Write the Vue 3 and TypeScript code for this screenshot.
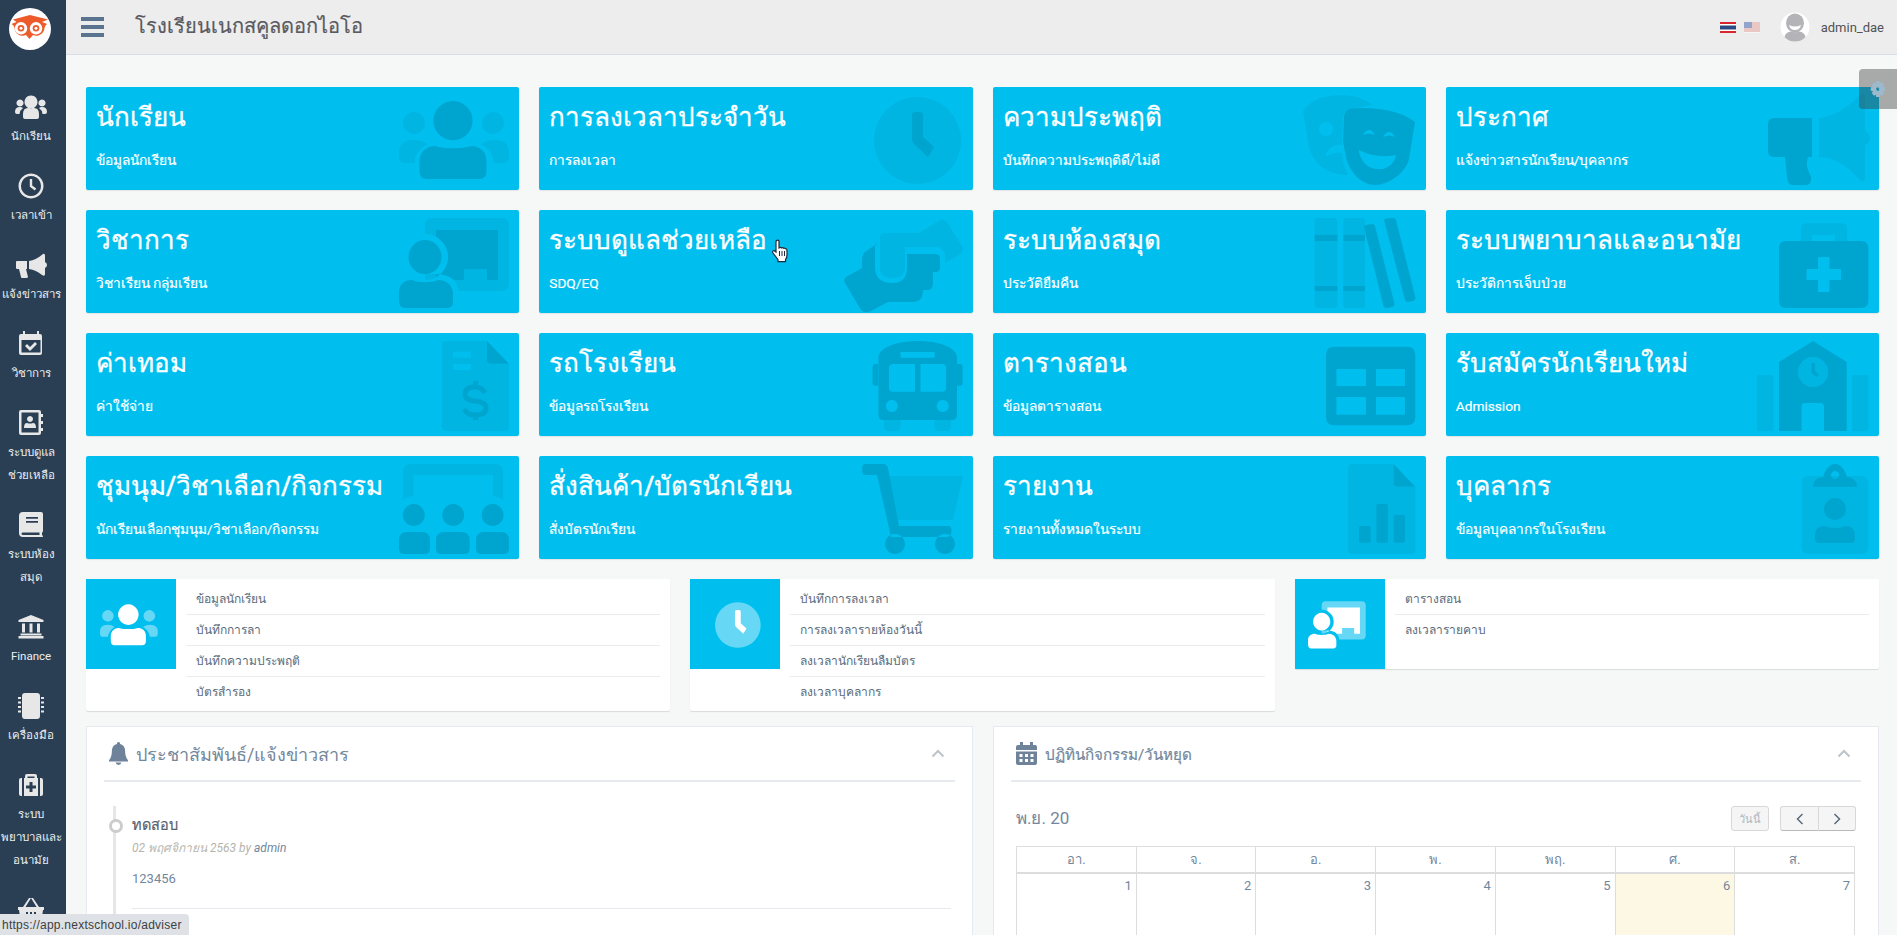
<script setup lang="ts">
type Layer = { c: 's' | 'p' | 'b' | 'l'; d: string }

const icons: Record<string, Layer[]> = {
  users: [
    { c: 's', d: 'M15 25a11 11 0 1 0 .01 0zM94 25a11 11 0 1 0 .01 0zM0 70V66Q0 53 14 53Q22 53 28 57Q17 63 15 76H6Q0 76 0 70ZM110 70V66Q110 53 96 53Q88 53 82 57Q93 63 95 76H104Q110 76 110 70Z' },
    { c: 'p', d: 'M54 14a19.6 19.6 0 1 0 .01 0zM20.5 82V74C20.5 64 29 59 36 59C44 62 64 62 72 59C80 59 87.5 64 87.5 74V84Q87.5 92 80 92H28Q20.5 92 20.5 84Z' }
  ],
  clock: [
    { c: 's', d: 'M64.5 10a43.5 43.5 0 1 0 .01 0z' },
    { c: 'p', d: 'M59 28Q59 25 62 25H67Q70 25 70 28V50L81 60L75 70L61 57Q59 55 59 52Z' }
  ],
  masks: [
    { c: 's', d: 'M-3 24C5 12 20 8 37 8C48 8 60 12 66 18L45 22Q37 24 37 32L36 60Q36 78 42 88C25 88 8 80 3 60ZM20 35a7 7 0 1 0 .01 0zM20 66Q27 56 36 58V66Q28 64 20 70Z' },
    { c: 'p', d: 'M44 22C55 20 90 20 109 35L103 72C100 86 82 98 69 98C56 98 43 85 40 70L37 55L38 30Q38 24 44 22ZM57 48Q63 38 69 48Q63 45 57 48ZM77 50Q83 40 89 50Q83 47 77 50ZM52.7 63Q71 72 90 68C88 78 80 83 71.6 82C62 82 54 74 52.7 63Z' }
  ],
  bullhorn: [
    { c: 's', d: 'M60 31C75 30 92 18 102 7Q106 5 106 12V44Q111 46 111 51Q111 56 106 58V90Q106 96 101 93C90 80 75 70 60 70Z' },
    { c: 'p', d: 'M15 31H53V70H49C46 80 50 84 52 90Q53 98 46 98H33Q29 98 28 90L26 70H15Q9 70 9 64V37Q9 31 15 31Z' }
  ],
  teacher: [
    { c: 's', d: 'M34 8H102Q110 8 110 16V73Q110 81 102 81H34Q26 81 26 73V16Q26 8 34 8Z' },
    { c: 'p', d: 'M37 20H99V70H88V59H65V70H37Z' },
    { c: 'b', d: 'M26 24a23 23 0 1 0 .01 0zM-4 103V84Q-4 64 16 64H36Q60 64 60 86V103Z' },
    { c: 'p', d: 'M26 30a16.5 17 0 1 0 .01 0zM0 90V82C0 74 6 70 13 70C20 73 32 73 39 70C48 70 54 76 54 84V92Q54 98 48 98H6Q0 98 0 90Z' }
  ],
  hands: [
    { c: 's', d: 'M33 23H66L87 10Q90 8 94 12L110 38Q110 42 106 45L92 53V45Q90 37 83 37H52V57Q52 68 39.5 68Q27 68 27 57V28Q27 23 33 23Z' },
    { c: 'p', d: 'M25 33L12 42Q9 45 9 50V58L-7 67Q-10 70 -8 73L8 100Q12 104 18 101L35 92H60Q70 92 70 80H75Q80 80 80 73V62H83Q87 62 87 57V48Q87 44 81 44H54V57Q54 73 39.5 73Q22 73 22 57V36Z' }
  ],
  books: [
    { c: 's', d: 'M12 8H28Q31.5 8 31.5 12V94Q31.5 98 28 98H12Q8.6 98 8.6 94V12Q8.6 8 12 8ZM40.5 8H56Q59 8 59 12V94Q59 98 56 98H40.5Q37.2 98 37.2 94V12Q37.2 8 40.5 8Z' },
    { c: 'p', d: 'M8.6 25H31.5V31H8.6ZM37.2 25H59V31H37.2ZM8.6 76H31.5V81H8.6ZM37.2 76H59V81H37.2ZM58 17Q58 15.5 60 15L66 14Q68.5 14 69 16L88.5 94Q88.5 96.5 86 97L81 98Q78 98 77.5 96ZM78 10Q78 9 80 8.5L87 8Q89.5 8 90 10L109.5 88Q109.5 90 107 91L102 92Q99.5 92 99 90Z' }
  ],
  kit: [
    { c: 's', d: 'M48 13H82Q88 13 88 19V31H76V25H53V31H42V19Q42 13 48 13Z' },
    { c: 'p', d: 'M27 31H102Q109.4 31 109.4 38V90Q109.4 98 102 98H27Q20 98 20 90V38Q20 31 27 31ZM59 47V59H47.6V70H59V82H70.5V70H82V59H70.5V47Z' }
  ],
  invoice: [
    { c: 's', d: 'M47 8H88V27Q88 31 92 31H110V94Q110 98 106 98H47Q43 98 43 94V12Q43 8 47 8ZM54 18.7V24.7H72V18.7ZM54 31V37H72V31Z' },
    { c: 'p', d: 'M88 8L110 30.7H92Q88 30.7 88 27Z' },
    { c: 'l', d: 'M86 60Q83 54 76 54Q66 54 66 61Q66 67 76 68Q87 69 87 75Q87 82 76 82Q68 82 65 76M76.5 48V54M76.5 82V87' }
  ],
  bus: [
    { c: 's', d: 'M31 87H47.6V93Q47.6 98 43 98H35Q31 98 31 93ZM81.6 87H98V93Q98 98 94 98H86Q81.6 98 81.6 93Z' },
    { c: 'p', d: 'M25.4 25C25.4 14 45 8 65 8C85 8 104 14 104 25V82Q104 87 99 87H30Q25.4 87 25.4 82ZM47.6 19V24.7H81.6V19ZM40 31Q36 31 36 35V55Q36 58.7 40 58.7H62V31ZM67.5 31V58.7H89Q93 58.7 93 55V35Q93 31 89 31ZM38.8 67a6 6 0 1 0 .01 0zM89.7 67a6 6 0 1 0 .01 0zM22 31H25V52.7H22Q19.6 52.7 19.6 50V34Q19.6 31 22 31ZM104 31H107Q109.6 31 109.6 34V50Q109.6 52.7 107 52.7H104Z' }
  ],
  table: [
    { c: 'p', d: 'M28 13.7H101Q109.3 13.7 109.3 22V84Q109.3 92.3 101 92.3H28Q20 92.3 20 84V22Q20 13.7 28 13.7ZM30.4 36V53H60V36ZM70 36V53H99V36ZM30.4 64V81.7H60V64ZM70 64V81.7H99V64Z' }
  ],
  school: [
    { c: 's', d: 'M0 42H12Q14.4 42 14.4 45V98H0Q-2 98 -2 95V45Q-2 42 0 42ZM93 42H107Q109.4 42 109.4 45V95Q109.4 98 107 98H93ZM54 24a15 15 0 1 0 .01 0z' },
    { c: 'p', d: 'M54 8L87.7 29V98H65V74Q65 70 61 70H46Q42.5 70 42.5 74V98H20V29ZM54 24a15 15 0 1 0 .01 0z' },
    { c: 'p', d: 'M52.5 30H56V38L60 41.5L58 44L52.5 40Z' }
  ],
  group: [
    { c: 's', d: 'M4 16Q4 8 12 8H96Q104 8 104 16V44Q98 40 94 40V19H14.4V40Q9 40 4 44Z' },
    { c: 'p', d: 'M14.8 48a11 11 0 1 0 .01 0zM54.2 48a11 11 0 1 0 .01 0zM93.6 48a11 11 0 1 0 .01 0zM0 84Q0 76 8 76H23Q31 76 31 84V93Q31 98 26 98H5Q0 98 0 93ZM37 84Q37 76 45 76H62Q70.6 76 70.6 84V93Q70.6 98 66 98H42Q37 98 37 93ZM77 84Q77 76 85 76H102Q110 76 110 84V93Q110 98 105 98H82Q77 98 77 93Z' }
  ],
  cart: [
    { c: 's', d: 'M27 20H110L100 64H36Z' },
    { c: 'p', d: 'M12 8H30Q34 8 35 12L46 70H95Q98.5 70 98.5 74Q98.5 81 94 81H38L24 19H12Q9 19 9 13.5Q9 8 12 8ZM42 78a10 10 0 1 0 .01 0zM92 78a10 10 0 1 0 .01 0z' }
  ],
  report: [
    { c: 's', d: 'M46 8H87.6V27Q87.6 31 91 31H109.3V94Q109.3 98 105 98H46Q42 98 42 94V12Q42 8 46 8Z' },
    { c: 'p', d: 'M87.6 8L109.3 30.7H91Q87.6 30.7 87.6 27ZM53 72Q53 70 55 70H63Q64.7 70 64.7 72V85Q64.7 86.7 63 86.7H55Q53 86.7 53 85ZM70.4 50Q70.4 48 72 48H80Q82 48 82 50V85Q82 86.7 80 86.7H72Q70.4 86.7 70.4 85ZM87.6 61Q87.6 59 89 59H97Q99 59 99 61V85Q99 86.7 97 86.7H89Q87.6 86.7 87.6 85Z' }
  ],
  badge: [
    { c: 's', d: 'M50 20H102Q109.4 20 109.4 27V91Q109.4 98 102 98H50Q42.5 98 42.5 91V27Q42.5 20 50 20Z' },
    { c: 'p', d: 'M54 30.7Q54 22 64 21C66 14 70 8 76 8C82 8 86 14 88 21Q98 22 98 30.7ZM76 15a4 4 0 1 0 .01 0zM76 42a11 11 0 1 0 .01 0zM56 80Q56 70 65 70Q76 74 87 70Q96 70 96 80V83Q96 87 92 87H60Q56 87 56 83Z' }
  ]
}

const navPaths: Record<string, string> = {
  users: 'M17 3.5a6.5 6.5 0 1 0 .01 0zM6 7.5a3.5 3.5 0 1 0 .01 0zM28 7.5a3.5 3.5 0 1 0 .01 0zM9 25v-3q0-6 5-6q3 1.5 6 0q5 0 5 6v3q0 2-2 2H11q-2 0-2-2ZM1 20q0-5 5-5q2 0 3 1q-3 2-3.5 6H3q-2 0-2-2ZM33 20q0-5-5-5q-2 0-3 1q3 2 3.5 6H31q2 0 2-2Z',
  clock: 'M17 2.5a12.5 12.5 0 1 0 .01 0zM17 5a10 10 0 1 1-.01 0zM15.8 8h2.4v6.5l4 3-1.4 1.9-5-3.7z',
  bullhorn: 'M29 4Q31 3 31 6V12Q33 13 33 15Q33 17 31 18V24Q31 27 28 25Q22 20 15 19V11Q22 10 29 4ZM3 11H13V19H12L14 27Q14 28 12 28H8Q7 28 7 27L5 19H3Q2 19 2 18V12Q2 11 3 11Z',
  calendar: 'M9 2h2v3h12V2h2v3h1q2 0 2 2v17q0 2-2 2H7q-2 0-2-2V7q0-2 2-2h2zM7.5 11v12.5h19V11zM11 17l2-2 3 3 5-5 2 2-7 7z',
  contact: 'M7 2H25q2 0 2 2v2h2v3h-2v4h2v3h-2v4h2v3h-2v2q0 2-2 2H7q-2 0-2-2V4q0-2 2-2zM7.5 4.5V24.5H24.5V4.5zM16 8a3 3 0 1 0 .01 0zM10 20q0-5 3-5q3 1 6 0q3 0 3 5z',
  book: 'M9 2H27q2 0 2 2V21q0 1-1 1.5V25q1 .5 1 1.5q0 .5-1 .5H9q-4 0-4-4V6q0-4 4-4zM12 7v1.8h12V7zM12 11v1.8h12V11zM9 22.5q-1.500 0-1.500 1.250T9 25h16.500v-2.500z',
  landmark: 'M17 3L29.500 8V10H4.500V8ZM8 11.500h3v9H8zM15.500 11.500h3v9h-3zM23 11.500h3v9h-3zM6.500 21.500h21v2h-21zM4.500 24h25v2.500h-25z',
  chip: 'M11 2h12q3 0 3 3v20q0 3-3 3H11q-3 0-3-3V5q0-3 3-3zM4 6h3v2H4zM4 10.500h3v2H4zM4 15h3v2H4zM4 19.500h3v2H4zM27 6h3v2h-3zM27 10.500h3v2h-3zM27 15h3v2h-3zM27 19.500h3v2h-3z',
  kit: 'M11 8V6q0-2 2-2h8q2 0 2 2V8h-2.500V6.500h-7V8zM5 10q0-2 2-2h1v18H7q-2 0-2-2zM29 10q0-2-2-2h-1v18h1q2 0 2-2zM10 8h14v18H10zM15.500 12v3.500H12v3h3.500V22h3v-3.500H22v-3h-3.500V12z',
  basket: 'M4 12H30V15H29L27 28H7L5 15H4ZM12 17v8h2v-8zM16 17v8h2v-8zM20 17v8h2v-8zM9 12L15 3h2L11.500 12ZM25 12L19 3h-2L22.500 12Z'
}

const navItems = [
  { icon: 'users', lines: ['นักเรียน'] },
  { icon: 'clock', lines: ['เวลาเข้า'] },
  { icon: 'bullhorn', lines: ['แจ้งข่าวสาร'] },
  { icon: 'calendar', lines: ['วิชาการ'] },
  { icon: 'contact', lines: ['ระบบดูแล', 'ช่วยเหลือ'] },
  { icon: 'book', lines: ['ระบบห้อง', 'สมุด'] },
  { icon: 'landmark', lines: ['Finance'] },
  { icon: 'chip', lines: ['เครื่องมือ'] },
  { icon: 'kit', lines: ['ระบบ', 'พยาบาลและ', 'อนามัย'] },
  { icon: 'basket', lines: [] as string[] }
]

const cards = [
  { title: 'นักเรียน', sub: 'ข้อมูลนักเรียน', icon: 'users' },
  { title: 'การลงเวลาประจำวัน', sub: 'การลงเวลา', icon: 'clock' },
  { title: 'ความประพฤติ', sub: 'บันทึกความประพฤติดี/ไม่ดี', icon: 'masks' },
  { title: 'ประกาศ', sub: 'แจ้งข่าวสารนักเรียน/บุคลากร', icon: 'bullhorn' },
  { title: 'วิชาการ', sub: 'วิชาเรียน กลุ่มเรียน', icon: 'teacher' },
  { title: 'ระบบดูแลช่วยเหลือ', sub: 'SDQ/EQ', icon: 'hands' },
  { title: 'ระบบห้องสมุด', sub: 'ประวัติยืมคืน', icon: 'books' },
  { title: 'ระบบพยาบาลและอนามัย', sub: 'ประวัติการเจ็บป่วย', icon: 'kit' },
  { title: 'ค่าเทอม', sub: 'ค่าใช้จ่าย', icon: 'invoice' },
  { title: 'รถโรงเรียน', sub: 'ข้อมูลรถโรงเรียน', icon: 'bus' },
  { title: 'ตารางสอน', sub: 'ข้อมูลตารางสอน', icon: 'table' },
  { title: 'รับสมัครนักเรียนใหม่', sub: 'Admission', icon: 'school' },
  { title: 'ชุมนุม/วิชาเลือก/กิจกรรม', sub: 'นักเรียนเลือกชุมนุม/วิชาเลือก/กิจกรรม', icon: 'group' },
  { title: 'สั่งสินค้า/บัตรนักเรียน', sub: 'สั่งบัตรนักเรียน', icon: 'cart' },
  { title: 'รายงาน', sub: 'รายงานทั้งหมดในระบบ', icon: 'report' },
  { title: 'บุคลากร', sub: 'ข้อมูลบุคลากรในโรงเรียน', icon: 'badge' }
]

const links = [
  { icon: 'users', items: ['ข้อมูลนักเรียน', 'บันทึกการลา', 'บันทึกความประพฤติ', 'บัตรสำรอง'] },
  { icon: 'clock', items: ['บันทึกการลงเวลา', 'การลงเวลารายห้องวันนี้', 'ลงเวลานักเรียนลืมบัตร', 'ลงเวลาบุคลากร'] },
  { icon: 'teacher', items: ['ตารางสอน', 'ลงเวลารายคาบ'] }
]

const weekdays = ['อา.', 'จ.', 'อ.', 'พ.', 'พฤ.', 'ศ.', 'ส.']
const days = [1, 2, 3, 4, 5, 6, 7]
</script>

<template>
  <div class="app">
    <aside class="sidebar">
      <div class="logo">
        <svg viewBox="0 0 42 42" width="42" height="42">
          <circle cx="21" cy="21" r="21" fill="#fff" />
          <path d="M4 11.500L21 7l18 4.500-6 2.500q3 1 5 2-2 1.500-2.500 4c-.5 6-7 9.500-11.500 7l-3.500 4-3.500-4c-5 2.500-11-1-11.500-7-.5-2.500-1.500-3-3-4q2-1 5-2z" fill="#ee5b2a" />
          <circle cx="12" cy="20.300" r="6.200" fill="#fff" />
          <circle cx="27" cy="20.300" r="6.200" fill="#fff" />
          <circle cx="12" cy="20.300" r="3.300" fill="#ee5b2a" />
          <circle cx="27" cy="20.300" r="3.300" fill="#ee5b2a" />
          <circle cx="12" cy="20.300" r="1.500" fill="#fff" />
          <circle cx="27" cy="20.300" r="1.500" fill="#fff" />
        </svg>
      </div>
      <nav class="nav">
        <a v-for="item in navItems" :key="item.icon" class="nav-item">
          <svg class="nav-icon" viewBox="0 0 34 30" width="34" height="30">
            <path :d="navPaths[item.icon]" fill="#e7e7e7" fill-rule="evenodd" />
          </svg>
          <span v-for="line in item.lines" :key="line" class="nav-line">{{ line }}</span>
        </a>
      </nav>
    </aside>

    <div class="page">
      <header class="topbar">
        <div class="burger"><i></i><i></i><i></i></div>
        <h1 class="school">โรงเรียนเนกสคูลดอกไอโอ</h1>
        <div class="top-right">
          <svg class="flag" viewBox="0 0 16 11" width="16" height="11">
            <rect width="16" height="11" fill="#d8262c" />
            <rect y="2" width="16" height="7" fill="#fff" />
            <rect y="3.500" width="16" height="4" fill="#2d4a80" />
          </svg>
          <svg class="flag us" viewBox="0 0 16 11" width="16" height="11">
            <rect width="16" height="11" fill="#fff" />
            <path d="M0 1h16M0 3h16M0 5h16M0 7h16M0 9h16" stroke="#d0483c" stroke-width="1" />
            <rect width="8" height="6" fill="#3c5fa8" />
          </svg>
          <svg class="avatar" viewBox="0 0 30 30" width="30" height="30">
            <circle cx="15" cy="15" r="14.500" fill="#fff" />
            <ellipse cx="15" cy="11" rx="9" ry="9.500" fill="#b4b4b8" />
            <path d="M9 13q6 3 12 0q-1 5-6 5t-6-5z" fill="#fff" />
            <path d="M4.500 25q1-5 6.500-5.500q4 1.500 8 0q5.500 .5 6.500 5.500q-4 4.500-10.500 4.500T4.500 25z" fill="#b4b4b8" />
          </svg>
          <span class="username">admin_dae</span>
        </div>
      </header>

      <main class="content">
        <section class="cards">
          <a v-for="card in cards" :key="card.title" class="card">
            <svg class="card-icon" viewBox="0 0 120 103" width="120" height="103">
              <path
                v-for="(layer, i) in icons[card.icon]"
                :key="i"
                :class="layer.c"
                :d="layer.d"
                fill-rule="evenodd"
              />
            </svg>
            <h3 class="card-title">{{ card.title }}</h3>
            <p class="card-sub">{{ card.sub }}</p>
          </a>
        </section>

        <section class="links">
          <div v-for="group in links" :key="group.icon" class="link-card">
            <div class="tile">
              <svg viewBox="0 0 120 103" width="63" height="54">
                <path
                  v-for="(layer, i) in icons[group.icon]"
                  :key="i"
                  :class="layer.c"
                  :d="layer.d"
                  fill-rule="evenodd"
                />
              </svg>
            </div>
            <ul class="link-list">
              <li v-for="item in group.items" :key="item">{{ item }}</li>
            </ul>
          </div>
        </section>

        <section class="panels">
          <div class="panel">
            <div class="panel-head">
              <svg viewBox="0 0 20 24" width="19" height="23">
                <path d="M10 0q1.800 0 1.800 2Q17 3.500 17 10q0 6 3 9v1.500H0V19q3-3 3-9q0-6.500 5.200-8Q8.200 0 10 0zM7 21.500h6q-.5 2.500-3 2.500t-3-2.500z" fill="#6e8299" />
              </svg>
              <h2>ประชาสัมพันธ์/แจ้งข่าวสาร</h2>
              <svg class="chevron" viewBox="0 0 14 9" width="14" height="9">
                <path d="M1.500 7.500L7 2l5.500 5.500" fill="none" stroke="#bcc3ca" stroke-width="2" />
              </svg>
            </div>
            <div class="timeline">
              <div class="entry">
                <span class="dot"></span>
                <h4>ทดสอบ</h4>
                <p class="meta">02 พฤศจิกายน 2563 by <span>admin</span></p>
                <p class="body">123456</p>
              </div>
            </div>
          </div>

          <div class="panel">
            <div class="panel-head">
              <svg viewBox="0 0 21 23" width="21" height="23">
                <path d="M4 0h3v3h7V0h3v3h2q2 0 2 2v3H0V5q0-2 2-2h2zM0 9.500h21V21q0 2-2 2H2q-2 0-2-2zM3.500 12v3h3v-3zM9 12v3h3v-3zM14.500 12v3h3v-3zM3.500 17v3h3v-3zM9 17v3h3v-3zM14.500 17v3h3v-3z" fill="#6e8299" fill-rule="evenodd" />
              </svg>
              <h2 class="narrow">ปฏิทินกิจกรรม/วันหยุด</h2>
              <svg class="chevron" viewBox="0 0 14 9" width="14" height="9">
                <path d="M1.500 7.500L7 2l5.500 5.500" fill="none" stroke="#bcc3ca" stroke-width="2" />
              </svg>
            </div>
            <div class="cal-toolbar">
              <span class="cal-title">พ.ย. 20</span>
              <button class="btn today">วันนี้</button>
              <div class="btn-group">
                <button class="btn arrow">
                  <svg viewBox="0 0 8 12" width="8" height="12"><path d="M6.500 1L1.500 6l5 5" fill="none" stroke="#5a6b7c" stroke-width="1.500" /></svg>
                </button>
                <button class="btn arrow">
                  <svg viewBox="0 0 8 12" width="8" height="12"><path d="M1.500 1l5 5-5 5" fill="none" stroke="#5a6b7c" stroke-width="1.500" /></svg>
                </button>
              </div>
            </div>
            <div class="cal-grid">
              <div v-for="day in weekdays" :key="day" class="cal-head">{{ day }}</div>
              <div v-for="d in days" :key="d" class="cal-day" :class="{ now: d === 6 }">{{ d }}</div>
            </div>
          </div>
        </section>
      </main>
    </div>

    <div class="gear">
      <svg viewBox="0 0 20 20" width="18" height="18">
        <path d="M8 1h4l.5 2.500 2-1 2.500 3-1.500 2 2.500.5v4l-2.500.5 1.500 2-2.500 3-2-1L12 19H8l-.5-2.500-2 1L3 14.500l1.500-2L2 12V8l2.500-.5L3 5.500l2.500-3 2 1zM10 8a2 2 0 1 0 .01 0z" fill="#9db9cc" fill-rule="evenodd" />
      </svg>
    </div>

    <svg class="cursor" viewBox="0 0 18 24" width="18" height="24">
      <path d="M5.500 1.500q1.500-1 2.500.5v7l1-.5q1-.3 1.500.5q1.200-.8 2 .2q1.300-.5 2 .5q1.500 0 1.500 2v4q0 3-1.500 5v2H7v-2L2 14q-1-2 1-2.500l2 1.500V3q0-1 .5-1.500z" fill="#fff" stroke="#1d2a3a" stroke-width="1.200" />
      <path d="M8.500 12v5M11 12v5M13.500 12v5" stroke="#1d2a3a" stroke-width="1" />
    </svg>

    <div class="status">https://app.nextschool.io/adviser</div>
  </div>
</template>

<style>
html,
body {
  height: 100%;
  overflow: hidden;
  background: #f6f8f8;
}
</style>

<style scoped>
.app {
  display: flex;
  height: 935px;
  overflow: hidden;
  font-family: Roboto, 'Noto Sans', 'Liberation Sans', sans-serif;
  color: #73879c;
  background: #f6f8f8;
}

.sidebar {
  flex: 0 0 66px;
  background: #2a3f54;
  overflow: hidden;
}

.logo {
  height: 81px;
  padding: 8px 0 0 9px;
  box-sizing: border-box;
}

.nav {
  width: 62px;
  display: flex;
  flex-direction: column;
}

.nav-item {
  display: flex;
  flex-direction: column;
  align-items: center;
  padding: 11px 0 12px;
}

.nav-icon {
  margin-bottom: 3px;
}

.nav-line {
  height: 23px;
  line-height: 23px;
  font-size: 11.5px;
  color: #eceff2;
  white-space: nowrap;
}

.page {
  flex: 1;
  min-width: 0;
  display: flex;
  flex-direction: column;
}

.topbar {
  height: 54px;
  flex: none;
  box-sizing: content-box;
  display: flex;
  align-items: center;
  background: #ededed;
  border-bottom: 1px solid #d9dee4;
  padding-left: 15px;
}

.burger {
  width: 23px;
  display: flex;
  flex-direction: column;
  gap: 4px;
}

.burger i {
  display: block;
  height: 4px;
  background: #5a738e;
}

.school {
  margin: 0 0 2px 31px;
  font-size: 20px;
  font-weight: 400;
  color: #5a5a5f;
  -webkit-text-stroke: 0.2px #5a5a5f;
}

.top-right {
  margin-left: auto;
  display: flex;
  align-items: center;
  padding-right: 13px;
}

.flag {
  margin-right: 8px;
}

.flag.us {
  opacity: 0.5;
  margin-right: 20px;
}

.avatar {
  margin-right: 11px;
}

.username {
  font-size: 13px;
  color: #515356;
}

.content {
  padding: 32px 18px 0 20px;
}

.cards {
  display: grid;
  grid-template-columns: repeat(4, 1fr);
  gap: 20px;
}

.card {
  position: relative;
  height: 103px;
  padding: 0 10px;
  box-sizing: border-box;
  background: #00bfef;
  border-radius: 2px;
  box-shadow: 0 1px 1px rgba(0, 0, 0, 0.08);
  color: #fff;
}

.card-icon {
  position: absolute;
  top: 0;
  right: 0;
  overflow: visible;
}

.card-title {
  position: relative;
  margin: 0;
  padding-top: 7px;
  font-size: 26px;
  line-height: 46px;
  font-weight: 500;
  white-space: nowrap;
  -webkit-text-stroke: 0.3px #fff;
}

.card-sub {
  position: relative;
  margin: 0;
  padding-top: 8px;
  font-size: 13.7px;
  line-height: 24px;
  font-weight: 400;
  -webkit-text-stroke: 0.2px #fff;
}

.s {
  fill: #00b5e2;
}

.p {
  fill: #00a5cf;
}

.b {
  fill: #00bfef;
}

.l {
  fill: none;
  stroke: #00a5cf;
  stroke-width: 5;
}

.links {
  display: grid;
  grid-template-columns: repeat(3, 1fr);
  gap: 20px;
  align-items: start;
  margin-top: 20px;
}

.link-card {
  display: flex;
  align-items: flex-start;
  background: #fff;
  border-radius: 2px;
  box-shadow: 0 1px 1px rgba(0, 0, 0, 0.12);
  min-height: 90px;
}

.tile {
  flex: 0 0 90px;
  height: 90px;
  display: flex;
  align-items: center;
  justify-content: center;
  background: #00bfef;
}

.tile .s {
  fill: rgba(255, 255, 255, 0.4);
}

.tile .p {
  fill: #fff;
}

.link-list {
  flex: 1;
  margin: 0;
  padding: 5px 10px 3px;
  list-style: none;
}

.link-list li {
  height: 31px;
  line-height: 31px;
  box-sizing: border-box;
  padding-left: 10px;
  font-size: 12px;
  color: #5a6b7c;
  border-bottom: 1px solid #eaedf0;
}

.link-list li:last-child {
  border-bottom: none;
}

.panels {
  display: grid;
  grid-template-columns: 887px 886px;
  gap: 20px;
  margin-top: 15px;
}

.panel {
  height: 400px;
  padding: 0 17px;
  box-sizing: border-box;
  background: #fff;
  border: 1px solid #e6e9ed;
}

.panel-head {
  height: 53px;
  display: flex;
  align-items: center;
  gap: 8px;
  padding: 0 5px;
  border-bottom: 2px solid #e6e9ed;
}

.panel-head h2 {
  margin: 0 0 -2px;
  font-size: 18px;
  font-weight: 400;
  color: #73879c;
}

.panel-head h2.narrow {
  font-size: 15.2px;
  -webkit-text-stroke: 0.2px #73879c;
}

.chevron {
  margin-left: auto;
  margin-right: 5px;
}

.timeline {
  position: relative;
  margin-top: 24px;
  padding-left: 28px;
}

.timeline::before {
  content: '';
  position: absolute;
  left: 9px;
  top: 0;
  height: 130px;
  width: 3px;
  background: #e6e6e6;
}

.entry {
  position: relative;
  padding-top: 10px;
  height: 103px;
  box-sizing: border-box;
  margin-right: 4px;
  border-bottom: 1px solid #e6e9ed;
}

.dot {
  position: absolute;
  left: -23px;
  top: 13px;
  width: 8px;
  height: 8px;
  border: 3px solid #ccc;
  border-radius: 50%;
  background: #fff;
}

.entry h4 {
  margin: 0;
  font-size: 14.5px;
  line-height: 20px;
  font-weight: 400;
  color: #55606c;
  -webkit-text-stroke: 0.2px #55606c;
}

.meta {
  margin: 2px 0 0;
  font-size: 12px;
  line-height: 20px;
  font-style: italic;
  color: #b5b5ad;
}

.meta span {
  color: #73879c;
}

.body {
  margin: 11px 0 0;
  font-size: 13px;
  line-height: 20px;
  color: #73879c;
}

.cal-toolbar {
  display: flex;
  align-items: center;
  margin: 24px 5px 15px 5px;
  height: 25px;
}

.cal-title {
  font-size: 17px;
  line-height: 21px;
  color: #73879c;
  margin-right: auto;
}

.btn {
  height: 25px;
  padding: 0;
  font-family: inherit;
  background: #f5f5f5;
  border: 1px solid #d8d8d8;
  border-radius: 3px;
  box-sizing: border-box;
}

.today {
  width: 38px;
  font-size: 11px;
  color: #b0b8c0;
  margin-right: 11px;
}

.btn-group {
  display: flex;
}

.arrow {
  width: 38px;
  display: flex;
  align-items: center;
  justify-content: center;
  border-bottom-color: #b9b9b9;
}

.arrow:first-child {
  border-radius: 3px 0 0 3px;
  border-right: none;
}

.arrow:last-child {
  border-radius: 0 3px 3px 0;
}

.cal-grid {
  display: grid;
  grid-template-columns: repeat(7, 1fr);
  margin: 0 6px 0 5px;
  border-top: 1px solid #ddd;
  border-left: 1px solid #ddd;
}

.cal-head {
  height: 27px;
  line-height: 26px;
  box-sizing: border-box;
  text-align: center;
  font-size: 13px;
  color: #73879c;
  border-right: 1px solid #ddd;
  border-bottom: 2px solid #ddd;
}

.cal-day {
  height: 110px;
  box-sizing: border-box;
  padding: 2px 4px 0;
  text-align: right;
  font-size: 13px;
  line-height: 20px;
  color: #73879c;
  border-right: 1px solid #ddd;
}

.cal-day.now {
  background: #fcf8e3;
}

.gear {
  position: absolute;
  top: 69px;
  right: 0;
  width: 38px;
  height: 40px;
  display: flex;
  align-items: center;
  justify-content: center;
  background: rgba(60, 60, 60, 0.42);
  border-radius: 4px 0 0 4px;
}

.cursor {
  position: absolute;
  left: 771px;
  top: 239px;
}

.status {
  position: absolute;
  left: 0;
  bottom: 0;
  height: 21px;
  padding: 0 7px 0 2px;
  line-height: 23px;
  font-family: 'Liberation Sans', sans-serif;
  font-size: 12px;
  letter-spacing: 0.25px;
  color: #3c4043;
  background: #dee1e6;
  border-top-right-radius: 4px;
}
</style>
